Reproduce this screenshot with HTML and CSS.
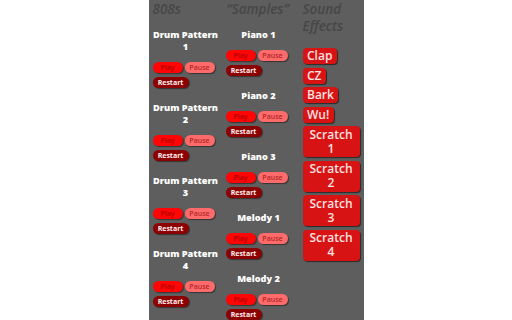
FILE: index.html
```html
<!DOCTYPE html>
<html>
<head>
<meta charset="utf-8">
<link rel="stylesheet" href="styles.css">
</head>
<body>
<div class="panel">
  <section class="col col-808">
    <h2 class="head">808s</h2>
    <div class="group">
      <h3 class="title">Drum Pattern 1</h3>
      <div class="controls"><button class="btn play">Play</button><button class="btn pause">Pause</button><button class="btn restart">Restart</button></div>
    </div>
    <div class="group">
      <h3 class="title">Drum Pattern 2</h3>
      <div class="controls"><button class="btn play">Play</button><button class="btn pause">Pause</button><button class="btn restart">Restart</button></div>
    </div>
    <div class="group">
      <h3 class="title">Drum Pattern 3</h3>
      <div class="controls"><button class="btn play">Play</button><button class="btn pause">Pause</button><button class="btn restart">Restart</button></div>
    </div>
    <div class="group">
      <h3 class="title">Drum Pattern 4</h3>
      <div class="controls"><button class="btn play">Play</button><button class="btn pause">Pause</button><button class="btn restart">Restart</button></div>
    </div>
  </section>
  <section class="col col-samples">
    <h2 class="head">“Samples”</h2>
    <div class="group">
      <h3 class="title">Piano 1</h3>
      <div class="controls"><button class="btn play">Play</button><button class="btn pause">Pause</button><button class="btn restart">Restart</button></div>
    </div>
    <div class="group">
      <h3 class="title">Piano 2</h3>
      <div class="controls"><button class="btn play">Play</button><button class="btn pause">Pause</button><button class="btn restart">Restart</button></div>
    </div>
    <div class="group">
      <h3 class="title">Piano 3</h3>
      <div class="controls"><button class="btn play">Play</button><button class="btn pause">Pause</button><button class="btn restart">Restart</button></div>
    </div>
    <div class="group">
      <h3 class="title">Melody 1</h3>
      <div class="controls"><button class="btn play">Play</button><button class="btn pause">Pause</button><button class="btn restart">Restart</button></div>
    </div>
    <div class="group">
      <h3 class="title">Melody 2</h3>
      <div class="controls"><button class="btn play">Play</button><button class="btn pause">Pause</button><button class="btn restart">Restart</button></div>
    </div>
  </section>
  <section class="col col-fx">
    <h2 class="head">Sound Effects</h2>
    <div class="fx-list">
      <button class="fx">Clap</button>
      <button class="fx">CZ</button>
      <button class="fx">Bark</button>
      <button class="fx">Wu!</button>
      <button class="fx big">Scratch 1</button>
      <button class="fx big">Scratch 2</button>
      <button class="fx big">Scratch 3</button>
      <button class="fx big">Scratch 4</button>
    </div>
  </section>
</div>
</body>
</html>
```

FILE: styles.css
```css
html, body {
  margin: 0;
  padding: 0;
  background: #ffffff;
  height: 320px;
  overflow: hidden;
}

.panel {
  width: 215px;
  height: 320px;
  margin: 0 auto;
  background: #5e5e5e;
  display: flex;
  box-sizing: border-box;
  padding-left: 4px;
  overflow: hidden;
  font-family: "Open Sans", "Noto Sans", sans-serif;
}

.col {
  display: flex;
  flex-direction: column;
}

.col-808 { width: 66px; }
.col-samples { width: 66px; margin-left: 7px; }
.col-fx { width: 60px; margin-left: 11px; }

.head {
  margin: 0;
  font-size: 13.5px;
  line-height: 17px;
  font-style: italic;
  font-weight: 600;
  color: #474747;
  padding-top: 1px;
}

.col-samples .head { padding-left: 1px; }

.group {
  margin-top: 11px;
  margin-bottom: 3px;
}

.title {
  margin: 0 0 9px 0;
  font-size: 9.2px;
  line-height: 12px;
  font-weight: 800;
  color: #ffffff;
  text-align: center;
}

.controls {
  display: flex;
  flex-wrap: wrap;
  column-gap: 2px;
  row-gap: 4px;
}

.btn {
  height: 11px;
  padding: 0;
  border: none;
  border-radius: 6px;
  font-family: "Open Sans", "Noto Sans", sans-serif;
  font-size: 7px;
  font-weight: 600;
  line-height: 11px;
  box-shadow: 1px 1px 1px rgba(0, 0, 0, 0.45);
}

.play {
  width: 30px;
  background: #ff0505;
  color: #b00000;
}

.pause {
  width: 30px;
  background: #ff6b6b;
  color: #b02828;
}

.restart {
  width: 36px;
  background: #8c0202;
  color: #fff0f0;
  font-weight: 700;
}

.fx-list {
  margin-top: 13px;
  display: flex;
  flex-direction: column;
  align-items: flex-start;
  gap: 3.5px;
}

.fx {
  height: 16px;
  padding: 0 4.5px;
  border: none;
  border-radius: 4px;
  background: #d81313;
  color: #ffe2e2;
  font-family: "Open Sans", "Noto Sans", sans-serif;
  font-size: 12px;
  font-weight: 600;
  line-height: 16px;
  box-shadow: 1px 1px 1px rgba(0, 0, 0, 0.55);
}

.fx.big {
  width: 57px;
  height: 31px;
  padding: 1px 6px;
  line-height: 14px;
  text-align: center;
}
```
